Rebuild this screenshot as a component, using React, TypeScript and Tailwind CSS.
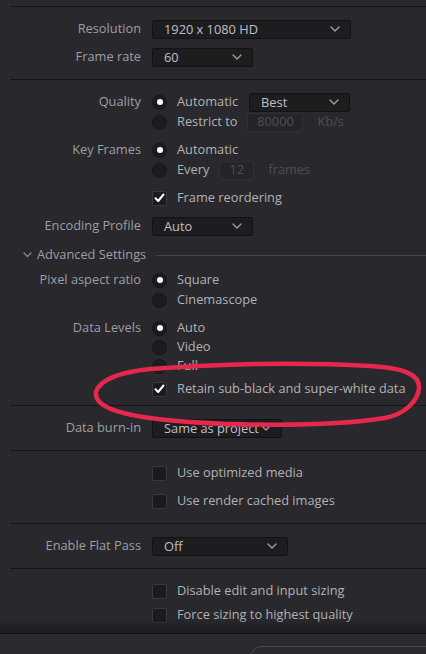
import React from 'react';

const Chevron: React.FC<{ className?: string }> = ({ className }) => (
  <svg width="10" height="6" viewBox="0 0 10 6" className={className} fill="none">
    <path d="M1 1 L5 5 L9 1" stroke="#9a9aa0" strokeWidth="1.4" strokeLinecap="round" strokeLinejoin="round" />
  </svg>
);

const Select: React.FC<{ value: string; width: string }> = ({ value, width }) => (
  <div className={`${width} h-[19px] flex items-center justify-between pl-[11px] pr-[10px] rounded-[2px] bg-[#1d1d20] border border-[#121214] text-[12.8px] text-[#c0c0c4]`}>
    <span className="leading-none">{value}</span>
    <Chevron />
  </div>
);

const Radio: React.FC<{ on?: boolean }> = ({ on }) => (
  <div className="w-[15px] h-[15px] shrink-0 rounded-full bg-[#1c1c1f] border border-[#161618] flex items-center justify-center">
    {on && <div className="w-[6px] h-[6px] rounded-full bg-white" />}
  </div>
);

const Check: React.FC<{ on?: boolean }> = ({ on }) => (
  <div className="w-[15px] h-[15px] shrink-0 rounded-[2px] bg-[#1b1b1d] border border-[#3a3a3e] flex items-center justify-center">
    {on && (
      <svg width="11" height="10" viewBox="0 0 11 10" fill="none">
        <path d="M1.5 5.2 L4.2 8 L9.5 1.5" stroke="#ffffff" strokeWidth="2" strokeLinecap="round" strokeLinejoin="round" />
      </svg>
    )}
  </div>
);

const Row: React.FC<{ label?: string; className?: string; children?: React.ReactNode }> = ({ label, className = '', children }) => (
  <div className={`flex items-center h-[20px] ${className}`}>
    <div className="w-[141px] shrink-0 text-right text-[12.8px] text-[#9e9ea4] whitespace-nowrap">{label}</div>
    <div className="ml-[11px] flex items-center">{children}</div>
  </div>
);

const Option: React.FC<{ children: React.ReactNode }> = ({ children }) => (
  <span className="ml-[10px] text-[12.8px] text-[#b2b2b6] whitespace-nowrap">{children}</span>
);

const Divider: React.FC<{ className?: string }> = ({ className = '' }) => (
  <div className={`ml-[10px] h-px bg-[#151517] ${className}`} />
);

const App: React.FC = () => {
  return (
    <div className="w-[426px] h-[654px] flex flex-col bg-[#28282d] overflow-hidden" style={{ fontFamily: '"Open Sans", "Liberation Sans", sans-serif' }}>
      <div className="relative flex-1 overflow-hidden">
        <div className="pt-[6px]">
          <Divider />
          <Row label="Resolution" className="mt-[12px]">
            <Select value="1920 x 1080 HD" width="w-[199px]" />
          </Row>
          <Row label="Frame rate" className="mt-[8px]">
            <Select value="60" width="w-[101px]" />
          </Row>
          <Divider className="mt-[12px]" />

          <Row label="Quality" className="mt-[12px]">
            <Radio on />
            <Option>Automatic</Option>
            <div className="ml-[11px]">
              <Select value="Best" width="w-[101px]" />
            </div>
          </Row>
          <Row>
            <Radio />
            <Option>Restrict to</Option>
            <div className="ml-[10px] w-[56px] h-[19px] flex items-center justify-center rounded-[2px] bg-[#252529] border border-[#303034] text-[12.8px] text-[#4e4e54]">80000</div>
            <span className="ml-[14px] text-[12.8px] text-[#4e4e54]">Kb/s</span>
          </Row>

          <Row label="Key Frames" className="mt-[8px]">
            <Radio on />
            <Option>Automatic</Option>
          </Row>
          <Row>
            <Radio />
            <Option>Every</Option>
            <div className="ml-[10px] w-[35px] h-[19px] flex items-center justify-center rounded-[2px] bg-[#252529] border border-[#303034] text-[12.8px] text-[#4e4e54]">12</div>
            <span className="ml-[14px] text-[12.8px] text-[#4e4e54]">frames</span>
          </Row>
          <Row className="mt-[8px]">
            <Check on />
            <Option>Frame reordering</Option>
          </Row>
          <Row label="Encoding Profile" className="mt-[8px]">
            <Select value="Auto" width="w-[101px]" />
          </Row>

          <div className="mt-[9px] h-[20px] flex items-center">
            <svg width="9" height="6" viewBox="0 0 9 6" className="ml-[23px]" fill="none">
              <path d="M1 1 L4.5 4.5 L8 1" stroke="#8e8e94" strokeWidth="1.2" strokeLinecap="round" strokeLinejoin="round" />
            </svg>
            <span className="ml-[5px] text-[12.8px] text-[#9e9ea4] whitespace-nowrap">Advanced Settings</span>
            <div className="ml-[10px] flex-1 h-px bg-[#44444a]" />
          </div>

          <Row label="Pixel aspect ratio" className="mt-[5px]">
            <Radio on />
            <Option>Square</Option>
          </Row>
          <Row>
            <Radio />
            <Option>Cinemascope</Option>
          </Row>

          <Row label="Data Levels" className="mt-[8px]">
            <Radio on />
            <Option>Auto</Option>
          </Row>
          <Row className="-mt-[1px]">
            <Radio />
            <Option>Video</Option>
          </Row>
          <Row className="-mt-[1px]">
            <Radio />
            <Option>Full</Option>
          </Row>
          <Row className="mt-[3px]">
            <Check on />
            <Option>Retain sub-black and super-white data</Option>
          </Row>
          <Divider className="mt-[6px]" />

          <Row label="Data burn-in" className="mt-[12px]">
            <Select value="Same as project" width="w-[130px]" />
          </Row>
          <Divider className="mt-[12px]" />

          <Row className="mt-[12px]">
            <Check />
            <Option>Use optimized media</Option>
          </Row>
          <Row className="mt-[8px]">
            <Check />
            <Option>Use render cached images</Option>
          </Row>
          <Divider className="mt-[12px]" />

          <Row label="Enable Flat Pass" className="mt-[12px]">
            <Select value="Off" width="w-[136px]" />
          </Row>
          <Divider className="mt-[12px]" />

          <Row className="mt-[12px]">
            <Check />
            <Option>Disable edit and input sizing</Option>
          </Row>
          <Row className="mt-[4px]">
            <Check />
            <Option>Force sizing to highest quality</Option>
          </Row>
          <Row className="mt-[4px]">
            <Check />
          </Row>
        </div>

        <div className="absolute left-0 right-0 bottom-0 h-[14px] bg-gradient-to-b from-transparent to-[#1c1c20]" />

        <svg className="absolute left-0 top-0 pointer-events-none" width="426" height="633" viewBox="0 0 426 633" fill="none">
          <path
            d="M150 369 C120 372 99 380 96 392 C94 405 114 413 150 418 C220 427 330 427 385 418 C405 414 418 401 419 388 C420 375 405 368 370 366 C300 362 220 364 150 369"
            stroke="#e5284c"
            strokeWidth="4.5"
            strokeLinecap="round"
          />
        </svg>
      </div>

      <div className="h-[21px] shrink-0 border-t border-[#111113] bg-[#29292e] relative">
        <div className="absolute left-[250px] top-[12px] w-[200px] h-[30px] rounded-[12px] border border-[#4a4a50]" />
      </div>
    </div>
  );
};

export default App;
